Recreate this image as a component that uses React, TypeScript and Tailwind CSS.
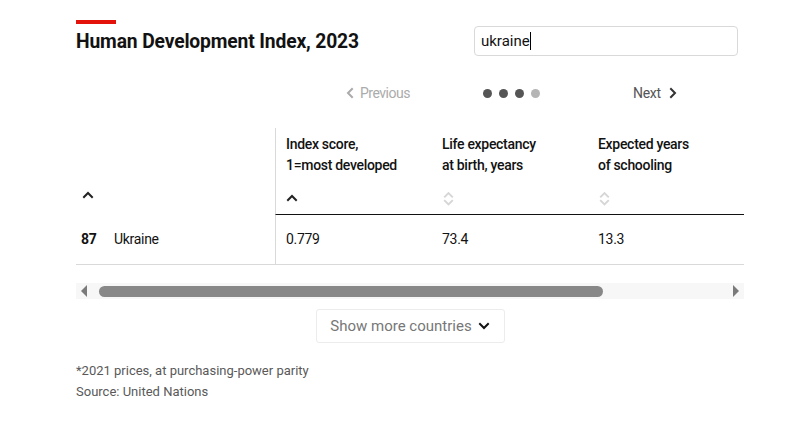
import React from "react";

const Chevron = ({ dir = "up", className = "" }: { dir?: "up" | "down" | "left" | "right"; className?: string }) => {
  const d =
    dir === "up"
      ? "M2 8 L6 4 L10 8"
      : dir === "down"
      ? "M2 4 L6 8 L10 4"
      : dir === "left"
      ? "M8 2 L4 6 L8 10"
      : "M4 2 L8 6 L4 10";
  return (
    <svg viewBox="0 0 12 12" className={className} fill="none" stroke="currentColor" strokeWidth={2} strokeLinecap="square">
      <path d={d} />
    </svg>
  );
};

const SortBoth = () => (
  <svg viewBox="0 0 12 14" className="w-[13px] h-[15px] text-[#d6d6d6]" fill="none" stroke="currentColor" strokeWidth={1.8}>
    <path d="M2 6 L6 2 L10 6" />
    <path d="M2 8.5 L6 12.5 L10 8.5" />
  </svg>
);

export default function App() {
  return (
    <div className="w-[791px] h-[423px] bg-white text-[#121212] overflow-hidden" style={{ fontFamily: "Roboto, 'Liberation Sans', sans-serif" }}>
      <div className="pl-[76px] pr-[47px] pt-[20px]">
        <div className="flex justify-between items-start">
          <div>
            <div className="w-[40px] h-[4px] bg-[#e3120b]" />
            <h1 className="mt-[6px] text-[19.3px] leading-[24px] font-bold tracking-[-0.15px]">Human Development Index, 2023</h1>
          </div>
          <div className="mt-[6px] mr-[6px] w-[264px] h-[30px] border border-[#d9d9d9] rounded-[4px] flex items-center px-[6px] text-[15px]">
            ukraine<span className="inline-block w-[1px] h-[18px] bg-black" />
          </div>
        </div>

        <div className="mt-[24px] flex items-center h-[26px] text-[14px] tracking-[-0.3px]">
          <div className="w-[268px]" />
          <div className="flex items-center gap-[4px] text-[#ababab] w-[139px]">
            <Chevron dir="left" className="w-[12px] h-[12px]" />
            <span className="tracking-[-0.5px]">Previous</span>
          </div>
          <div className="flex items-center gap-[7px]">
            <span className="w-[9px] h-[9px] rounded-full bg-[#555]" />
            <span className="w-[9px] h-[9px] rounded-full bg-[#555]" />
            <span className="w-[9px] h-[9px] rounded-full bg-[#555]" />
            <span className="w-[9px] h-[9px] rounded-full bg-[#b5b5b5]" />
          </div>
          <div className="flex items-center gap-[6px] text-[#555] ml-[93px]">
            <span>Next</span>
            <Chevron dir="right" className="w-[12px] h-[12px] text-[#333]" />
          </div>
        </div>

        <div className="mt-[22px] w-[668px] text-[14px] tracking-[-0.3px]">
          <div className="flex">
            <div className="w-[199px] h-[86px] flex items-end pb-[13px] pl-[6px]">
              <Chevron dir="up" className="w-[12px] h-[12px] text-[#222]" />
            </div>
            <div className="flex-1 border-l border-[#d9d9d9] border-b border-b-[#121212] flex">
              {[
                ["Index score,", "1=most developed", true],
                ["Life expectancy", "at birth, years", false],
                ["Expected years", "of schooling", false],
              ].map(([a, b, active], i) => (
                <div key={i} className="w-[156px] pl-[10px] pt-[6px] h-[86px] flex flex-col font-medium leading-[21px]">
                  <span>{a as string}</span>
                  <span>{b as string}</span>
                  <div className="mt-auto mb-[8px] h-[16px] flex items-center">
                    {active ? <Chevron dir="up" className="w-[12px] h-[12px] text-[#222]" /> : <SortBoth />}
                  </div>
                </div>
              ))}
            </div>
          </div>
          <div className="flex border-b border-[#d9d9d9] h-[50px]">
            <div className="w-[199px] flex items-center pl-[5px]">
              <span className="font-bold w-[33px]">87</span>
              <span>Ukraine</span>
            </div>
            <div className="flex-1 border-l border-[#d9d9d9] flex items-center">
              {["0.779", "73.4", "13.3"].map((v) => (
                <div key={v} className="w-[156px] pl-[10px]">{v}</div>
              ))}
            </div>
          </div>
        </div>

        <div className="mt-[18px] w-[668px] h-[16px] bg-[#f7f7f7] flex items-center px-[4px]">
          <svg viewBox="0 0 8 12" className="w-[8px] h-[12px] text-[#7a7a7a]" fill="currentColor">
            <path d="M7 0 L7 12 L1 6 Z" />
          </svg>
          <div className="ml-[11px] w-[504px] h-[11px] rounded-full bg-[#888]" />
          <div className="flex-1" />
          <svg viewBox="0 0 8 12" className="w-[8px] h-[12px] text-[#7a7a7a]" fill="currentColor">
            <path d="M1 0 L1 12 L7 6 Z" />
          </svg>
        </div>

        <div className="mt-[10px] flex justify-center w-[668px]">
          <div className="w-[189px] h-[34px] border border-[#ececec] rounded-[3px] flex items-center justify-center gap-[6px] text-[15px] text-[#777]">
            <span>Show more countries</span>
            <Chevron dir="down" className="w-[12px] h-[12px] text-[#121212]" />
          </div>
        </div>

        <div className="mt-[17px] text-[13px] leading-[21px] text-[#595959]">
          <p>*2021 prices, at purchasing-power parity</p>
          <p>Source: United Nations</p>
        </div>
      </div>
    </div>
  );
}
